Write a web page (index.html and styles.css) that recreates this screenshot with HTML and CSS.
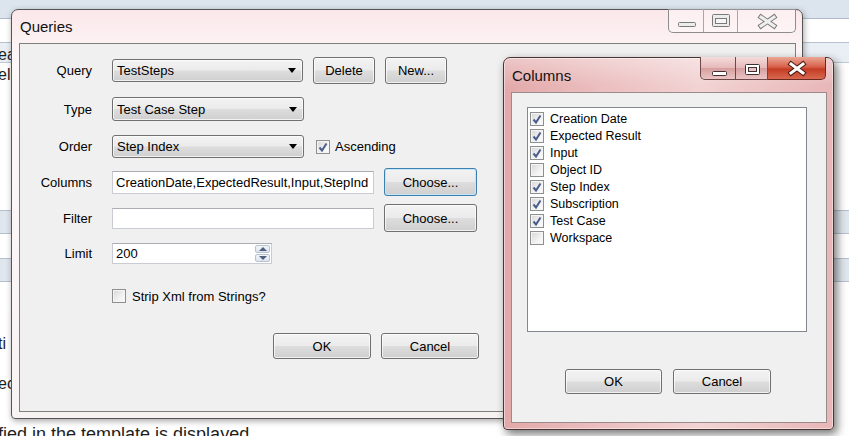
FILE: index.html
```html
<!DOCTYPE html>
<html lang="en">
<head>
  <meta charset="UTF-8" />
  <title>Queries</title>
  <link rel="stylesheet" href="styles.css">
</head>
<body>
  <!-- page behind the dialogs -->
  <div class="page">
    <div class="bar-top"></div>
    <div class="row-plain"></div>
    <div class="row-tint"><span class="clip">ea</span></div>
    <div class="row-long"><span class="clip">el</span></div>
    <div class="band"></div>
    <div class="row-gap"></div>
    <div class="band"></div>
    <div class="note note-ti"><span class="clip">ti</span></div>
    <div class="note note-ec"><span class="clip">ec</span></div>
    <div class="note note-last">fied in the template is displayed.</div>
  </div>

  <!-- Queries dialog (inactive) -->
  <div class="window queries">
    <div class="titlebar">
      <span class="title">Queries</span>
      <div class="caption inactive">
        <div class="cbtn cmin">
          <svg width="34" height="23"><rect x="9.5" y="13.5" width="17" height="4" rx="1" fill="#ececec" stroke="#7a7a7a"/></svg>
        </div>
        <div class="cbtn cmax">
          <svg width="34" height="23"><rect x="8.5" y="5.5" width="17" height="12" rx="1" fill="#ececec" stroke="#7a7a7a"/><rect x="11.5" y="9.5" width="11" height="5" fill="#f6f6f6" stroke="#7a7a7a"/></svg>
        </div>
        <div class="cbtn cclose">
          <svg width="59" height="23"><path d="M23 8 L36 17 M36 8 L23 17" stroke="#7a7a7a" stroke-width="5" stroke-linecap="square"/><path d="M23 8 L36 17 M36 8 L23 17" stroke="#efefef" stroke-width="3" stroke-linecap="square"/></svg>
        </div>
      </div>
    </div>
    <div class="client">
      <div class="row row-query">
        <label class="lbl">Query</label>
        <div class="combo w191"><span>TestSteps</span><i class="arrow"></i></div>
        <div class="btn w62">Delete</div>
        <div class="btn w62">New...</div>
      </div>
      <div class="row row-type">
        <label class="lbl">Type</label>
        <div class="combo w192 h24"><span>Test Case Step</span><i class="arrow"></i></div>
      </div>
      <div class="row row-order">
        <label class="lbl">Order</label>
        <div class="combo w192"><span>Step Index</span><i class="arrow"></i></div>
        <div class="check-label ascending">
          <span class="cb"><svg width="12" height="12"><path d="M2.5 6.5 L5 9.5 L9.5 2.5" fill="none" stroke="#4a5d8c" stroke-width="2"/></svg></span>
          Ascending
        </div>
      </div>
      <div class="row row-columns">
        <label class="lbl">Columns</label>
        <div class="textbox w262 h23">CreationDate,ExpectedResult,Input,StepInd</div>
        <div class="btn w93 h28 focused">Choose...</div>
      </div>
      <div class="row row-filter">
        <label class="lbl">Filter</label>
        <div class="textbox w262 h21"></div>
        <div class="btn w93 h28">Choose...</div>
      </div>
      <div class="row row-limit">
        <label class="lbl">Limit</label>
        <div class="textbox numeric">
          <span>200</span>
          <div class="spin">
            <div class="spin-up"><i></i></div>
            <div class="spin-down"><i></i></div>
          </div>
        </div>
      </div>
      <div class="row row-strip">
        <div class="check-label strip">
          <span class="cb"></span>
          Strip Xml from Strings?
        </div>
      </div>
      <div class="row row-buttons">
        <div class="btn w98 h26">OK</div>
        <div class="btn w98 h26">Cancel</div>
      </div>
    </div>
  </div>

  <!-- Columns dialog (active) -->
  <div class="window columns">
    <div class="titlebar">
      <span class="title">Columns</span>
      <div class="caption active">
        <div class="cbtn amin">
          <svg width="36" height="23"><rect x="11.5" y="14.5" width="14" height="4" rx="1" fill="#fff" stroke="#3d3030"/></svg>
        </div>
        <div class="cbtn amax">
          <svg width="32" height="23"><rect x="9.5" y="7.5" width="14" height="10" rx="1" fill="#fff" stroke="#3d3030"/><rect x="12.5" y="10.5" width="8" height="4" fill="#e9c3c3" stroke="#3d3030"/></svg>
        </div>
        <div class="cbtn aclose">
          <svg width="58" height="23"><path d="M23 7 L35 16 M35 7 L23 16" stroke="#4a1a14" stroke-width="5" stroke-linecap="square"/><path d="M23 7 L35 16 M35 7 L23 16" stroke="#fff" stroke-width="3" stroke-linecap="square"/></svg>
        </div>
      </div>
    </div>
    <div class="client">
      <div class="listbox">
        <div class="item"><span class="cb"><svg width="12" height="12"><path d="M2.5 6.5 L5 9.5 L9.5 2.5" fill="none" stroke="#4a5d8c" stroke-width="2"/></svg></span>Creation Date</div>
        <div class="item"><span class="cb"><svg width="12" height="12"><path d="M2.5 6.5 L5 9.5 L9.5 2.5" fill="none" stroke="#4a5d8c" stroke-width="2"/></svg></span>Expected Result</div>
        <div class="item"><span class="cb"><svg width="12" height="12"><path d="M2.5 6.5 L5 9.5 L9.5 2.5" fill="none" stroke="#4a5d8c" stroke-width="2"/></svg></span>Input</div>
        <div class="item"><span class="cb"></span>Object ID</div>
        <div class="item"><span class="cb"><svg width="12" height="12"><path d="M2.5 6.5 L5 9.5 L9.5 2.5" fill="none" stroke="#4a5d8c" stroke-width="2"/></svg></span>Step Index</div>
        <div class="item"><span class="cb"><svg width="12" height="12"><path d="M2.5 6.5 L5 9.5 L9.5 2.5" fill="none" stroke="#4a5d8c" stroke-width="2"/></svg></span>Subscription</div>
        <div class="item"><span class="cb"><svg width="12" height="12"><path d="M2.5 6.5 L5 9.5 L9.5 2.5" fill="none" stroke="#4a5d8c" stroke-width="2"/></svg></span>Test Case</div>
        <div class="item"><span class="cb"></span>Workspace</div>
      </div>
      <div class="col-buttons">
        <div class="btn w97 h25">OK</div>
        <div class="btn w98 h25">Cancel</div>
      </div>
    </div>
  </div>
</body>
</html>
```

FILE: styles.css
```css
body {
  margin: 0;
  width: 849px;
  height: 436px;
  overflow: hidden;
  position: relative;
  background: #fff;
  font-family: "Liberation Sans", Arial, sans-serif;
  font-size: 13px;
  color: #000;
}

/* background page */
.page {
  font-size: 16px;
  color: #1e1e1e;
}

.bar-top {
  height: 18px;
  background: #dce4ed;
  border-bottom: 1px solid #aebbca;
}

.row-plain {
  height: 23px;
  border-bottom: 1px solid #b7c1cd;
}

.row-tint {
  height: 19px;
  line-height: 24px;
  background: #e9eff5;
  border-bottom: 1px solid #c0c9d4;
}

.row-long {
  height: 147px;
  line-height: 24px;
}

.band {
  height: 22px;
  background: #dfe6ee;
  border-top: 1px solid #b7c1cd;
  border-bottom: 1px solid #b7c1cd;
}

.row-gap { height: 24px; }

.clip {
  margin-left: -2px;
}

.note {
  height: 20px;
  line-height: 20px;
  white-space: nowrap;
}

.note-ti { margin-top: 52px; }
.note-ec { margin-top: 20px; }
.note-last { margin-top: 30px; margin-left: -2px; font-size: 18px; }

/* windows */
.window {
  position: absolute;
  border: 1px solid #555;
  border-radius: 7px 7px 4px 4px;
  display: flex;
  flex-direction: column;
}

.queries {
  left: 11px;
  top: 9px;
  width: 790px;
  height: 408px;
  background: linear-gradient(180deg, #fbe7ea 0%, #fdf7f7 12%, #f8f3f3 100%);
  box-shadow: 1px 2px 6px rgba(0, 0, 0, 0.35);
}

.columns {
  left: 503px;
  top: 57px;
  width: 329px;
  height: 371px;
  border-color: #4a3434;
  background:
    linear-gradient(180deg, rgba(255, 255, 255, 0.35), rgba(255, 255, 255, 0) 28px),
    linear-gradient(90deg, #e3a9aa 0%, #edc2c3 35%, #f2d3d3 60%, #e8b6b7 100%);
  box-shadow: 3px 4px 10px rgba(0, 0, 0, 0.55), inset 0 0 0 1px rgba(255, 255, 255, 0.45);
}

.titlebar {
  position: relative;
  height: 33px;
  display: flex;
  align-items: center;
  padding-left: 8px;
}

.columns .titlebar { height: 34px; }

.title {
  font-size: 15px;
  color: #111;
}

.caption {
  position: absolute;
  top: -1px;
  right: 6px;
  display: flex;
  height: 23px;
}

.columns .caption { right: 7px; }

.cbtn {
  height: 23px;
  box-sizing: border-box;
}

.cbtn svg { display: block; }

.inactive {
  border: 1px solid #8d8d8d;
  border-top: none;
  border-radius: 0 0 5px 5px;
  background: rgba(255, 255, 255, 0.35);
}

.inactive .cbtn + .cbtn { border-left: 1px solid #a8a8a8; }
.inactive .cmin { width: 34px; }
.inactive .cmax { width: 34px; }
.inactive .cclose { width: 58px; }

.active .cbtn {
  border: 1px solid #6e4848;
  border-top: none;
}

.active .amin {
  width: 36px;
  border-radius: 0 0 0 5px;
  background: linear-gradient(180deg, #f4dcdc 0%, #e6b9b9 50%, #d79e9e 51%, #ebc4c4 100%);
}

.active .amax {
  width: 32px;
  border-left: none;
  background: linear-gradient(180deg, #f4dcdc 0%, #e6b9b9 50%, #d79e9e 51%, #ebc4c4 100%);
}

.active .aclose {
  width: 58px;
  border-left: none;
  border-color: #6b2a20;
  border-radius: 0 0 5px 0;
  background: linear-gradient(180deg, #eaa795 0%, #d8614a 45%, #c43c24 55%, #d8694f 100%);
}

.client {
  flex: 1;
  margin: 0 6px 6px 7px;
  border: 1px solid #7f7f7f;
  background: #f0f0f0;
}

.columns .client {
  margin: 0 6px 6px 7px;
  border-color: #9a8a8a;
}

/* form rows */
.row {
  display: flex;
  align-items: center;
  gap: 10px;
}

.lbl {
  width: 72px;
  margin-right: 10px;
  text-align: right;
}

.row-query { margin-top: 13px; height: 27px; }
.row-type { margin-top: 13px; height: 24px; }
.row-order { margin-top: 14px; height: 23px; }
.row-columns { margin-top: 10px; height: 28px; }
.row-filter { margin-top: 8px; height: 28px; }
.row-limit { margin-top: 11px; height: 21px; }
.row-strip { margin-top: 24px; height: 16px; padding-left: 92px; }
.row-buttons { margin-top: 29px; height: 26px; padding-left: 253px; }

.combo, .btn {
  box-sizing: border-box;
  height: 23px;
  border: 1px solid #707070;
  border-radius: 3px;
  background: linear-gradient(180deg, #f3f3f3 0%, #ebebeb 48%, #dddddd 52%, #cfcfcf 100%);
  box-shadow: inset 0 0 0 1px rgba(255, 255, 255, 0.7);
  display: flex;
  align-items: center;
}

.combo { padding-left: 4px; }

.btn {
  justify-content: center;
  height: 27px;
}

.focused {
  border-color: #3c7fb1;
  box-shadow: inset 0 0 0 1px #c6e6f8;
}

.arrow {
  margin-left: auto;
  margin-right: 6px;
  border-left: 4.5px solid transparent;
  border-right: 4.5px solid transparent;
  border-top: 5px solid #000;
}

.textbox {
  box-sizing: border-box;
  background: #fff;
  border: 1px solid #c9ccd3;
  border-top-color: #abadb3;
  padding-left: 3px;
  display: flex;
  align-items: center;
  white-space: nowrap;
  overflow: hidden;
}

.w62 { width: 62px; }
.w93 { width: 93px; }
.w97 { width: 97px; }
.w98 { width: 98px; }
.w191 { width: 191px; }
.w192 { width: 192px; }
.w262 { width: 262px; }
.h21 { height: 21px; }
.h23 { height: 23px; }
.h24 { height: 24px; }
.h25 { height: 25px; }
.h26 { height: 26px; }
.h28 { height: 28px; }

.numeric {
  width: 160px;
  height: 21px;
  padding-right: 1px;
}

.spin {
  margin-left: auto;
  width: 15px;
  height: 17px;
  display: flex;
  flex-direction: column;
  gap: 1px;
}

.spin-up, .spin-down {
  flex: 1;
  border: 1px solid #b9c2cf;
  border-radius: 2px;
  background: linear-gradient(180deg, #f2f5f9, #dde4ee);
  display: flex;
  align-items: center;
  justify-content: center;
}

.spin-up i {
  border-left: 4px solid transparent;
  border-right: 4px solid transparent;
  border-bottom: 4px solid #4d5f7d;
}

.spin-down i {
  border-left: 4px solid transparent;
  border-right: 4px solid transparent;
  border-top: 4px solid #4d5f7d;
}

.check-label {
  display: flex;
  align-items: center;
  gap: 6px;
}

.ascending { margin-left: 2px; gap: 5px; }

.cb {
  box-sizing: border-box;
  width: 14px;
  height: 14px;
  flex: none;
  border: 1px solid #8e8f8f;
  background: linear-gradient(135deg, #d6d6d6 0%, #f2f2f2 60%, #fcfcfc 100%);
  box-shadow: inset 0 0 0 1px #f5f5f5;
  display: flex;
  align-items: center;
  justify-content: center;
}

.cb svg { display: block; }

/* Columns list */
.listbox {
  box-sizing: border-box;
  width: 280px;
  height: 225px;
  margin: 14px 0 0 15px;
  background: #fff;
  border: 1px solid #828790;
  padding-top: 2px;
}

.item {
  height: 17px;
  display: flex;
  align-items: center;
  gap: 6px;
  padding-left: 2px;
  font-size: 12.5px;
}

.col-buttons {
  display: flex;
  gap: 11px;
  margin: 37px 0 0 53px;
}
```
